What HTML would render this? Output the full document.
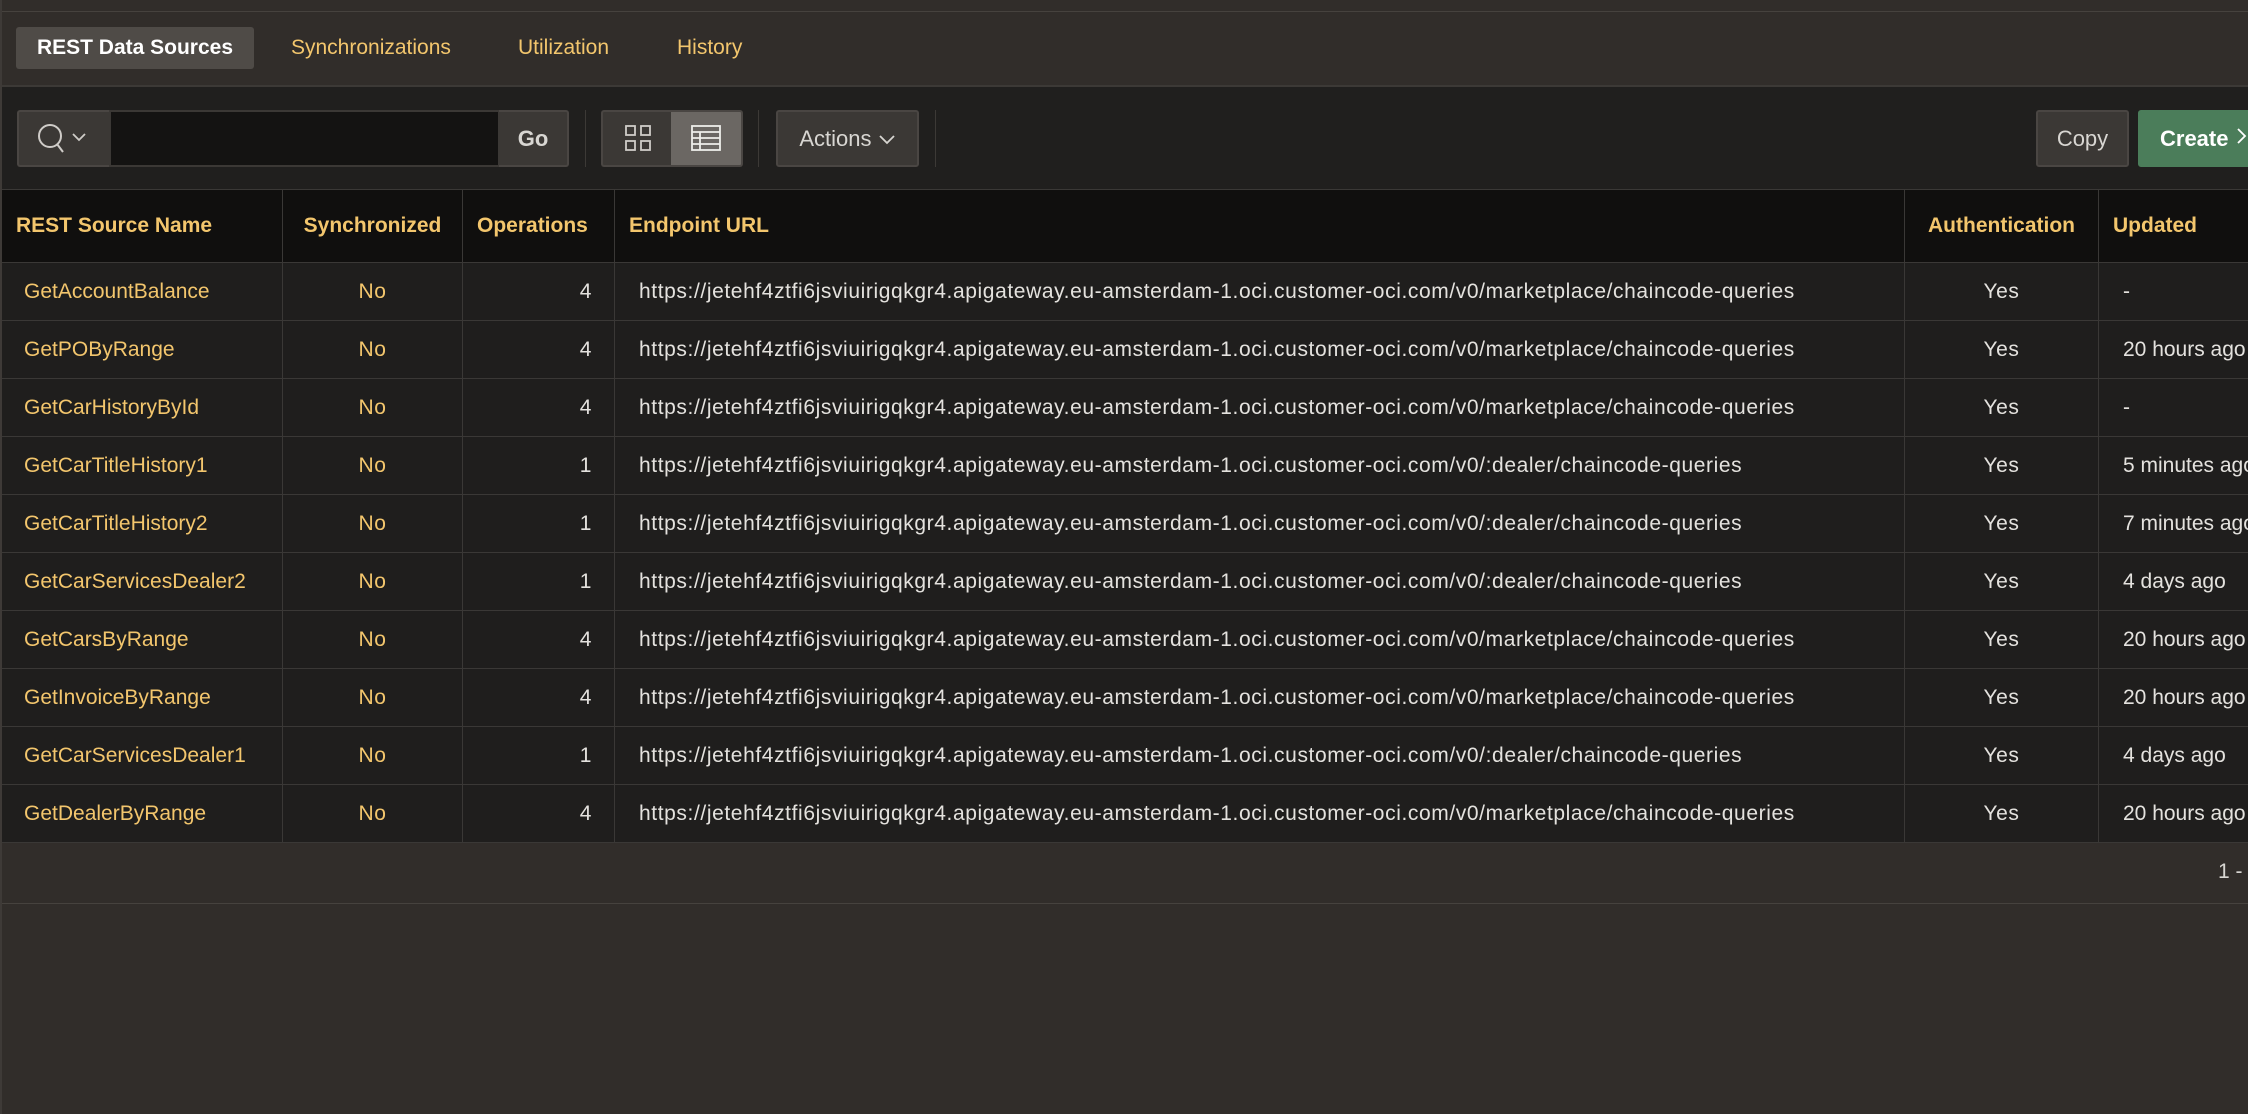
<!DOCTYPE html>
<html><head><meta charset="utf-8"><style>
*{box-sizing:border-box;margin:0;padding:0}
html,body{width:2248px;height:1114px;overflow:hidden;background:#312d2a;font-family:"Liberation Sans",sans-serif}
.abs{position:absolute}
.topline{left:0;top:11px;width:2248px;height:1px;background:#46423e}
.leftline{left:0;top:0;width:2px;height:1114px;background:#3e3a37}
.tab{top:27px;height:42px;line-height:42px;font-size:21px;color:#f3c66d;white-space:nowrap}
.tabact{left:16px;width:238px;background:#4f4b47;border-radius:3px;color:#fff;font-weight:bold;text-align:center}
.tabbar{left:0;top:85px;width:2248px;height:104px;background:#201f1e;border-top:2px solid #3c3936}
.btn{top:110px;height:57px;background:#3b3835;border:2px solid #4a4643;border-radius:3px;color:#d8d6d2;font-size:22px;text-align:center;line-height:53px;white-space:nowrap}
.sep{top:110px;width:1px;height:57px;background:#3c3936}
table{position:absolute;left:1px;top:189px;border-collapse:collapse;table-layout:fixed;width:2400px}
th{background:#100f0e;height:73px;color:#f3c66d;font-size:21px;font-weight:bold;text-align:left;padding:0 14px;border-left:1px solid #3a3836;border-top:1px solid #3a3836;white-space:nowrap}
td{background:#1f1e1d;height:58px;font-size:21px;letter-spacing:0.6px;color:#e4e2de;border:1px solid #3a3836;padding:0 14px;white-space:nowrap;overflow:hidden}
td.n{color:#f3c66d;padding-left:22px;letter-spacing:0}
td.s{color:#f3c66d;text-align:center}
td.o{text-align:right;padding-right:22px}
td.u{padding-left:24px}
td.a{text-align:center}
td.d{padding-left:24px;letter-spacing:0}
</style></head><body>
<div class="abs topline"></div>
<div class="abs tab tabact">REST Data Sources</div>
<div class="abs tab" style="left:291px">Synchronizations</div>
<div class="abs tab" style="left:518px">Utilization</div>
<div class="abs tab" style="left:677px">History</div>
<div class="abs tabbar"></div>
<div class="abs btn" style="left:17px;width:93px;border-right:none;border-radius:3px 0 0 3px">
<svg width="90" height="53" viewBox="0 0 90 53"><circle cx="30" cy="24" r="11" fill="none" stroke="#cfccc8" stroke-width="2"/><path d="M37 32l6 8" stroke="#cfccc8" stroke-width="2"/><path d="M53 22l6 6 6-6" fill="none" stroke="#cfccc8" stroke-width="1.8"/></svg></div>
<div class="abs" style="left:109px;top:110px;width:391px;height:57px;background:#141312;border:2px solid #3b3835"></div>
<div class="abs btn" style="left:499px;width:70px;border-left:none;border-radius:0 3px 3px 0;font-weight:bold">Go</div>
<div class="abs sep" style="left:585px"></div>
<div class="abs btn" style="left:601px;width:71px;border-right:none;border-radius:3px 0 0 3px">
<svg width="68" height="53" viewBox="0 0 68 53"><g fill="none" stroke="#cfccc8" stroke-width="1.8"><rect x="22" y="14" width="9" height="9"/><rect x="37" y="14" width="9" height="9"/><rect x="22" y="29" width="9" height="9"/><rect x="37" y="29" width="9" height="9"/></g></svg></div>
<div class="abs btn" style="left:671px;width:72px;background:#6b6763;border-left:none;border-radius:0 3px 3px 0">
<svg width="68" height="53" viewBox="0 0 68 53"><g fill="none" stroke="#eeeeea" stroke-width="1.8"><rect x="20" y="14" width="28" height="24"/><path d="M20 20h28M20 26h28M20 32h28M28 20v18"/></g></svg></div>
<div class="abs sep" style="left:758px"></div>
<div class="abs btn" style="left:776px;width:143px">Actions <svg width="18" height="12" viewBox="0 0 18 12"><path d="M2 2l7 7 7-7" fill="none" stroke="#d8d6d2" stroke-width="1.8"/></svg></div>
<div class="abs sep" style="left:935px"></div>
<div class="abs btn" style="left:2036px;width:93px">Copy</div>
<div class="abs btn" style="left:2138px;width:150px;background:#4b7d5a;border-color:#4b7d5a;color:#fff;font-weight:bold;text-align:left;padding-left:20px">Create <svg width="14" height="20" viewBox="0 0 14 20"><path d="M3 3l7 7-7 7" fill="none" stroke="#fff" stroke-width="1.8"/></svg></div>
<table>
<colgroup><col style="width:281px"><col style="width:180px"><col style="width:152px"><col style="width:1290px"><col style="width:194px"><col style="width:303px"></colgroup>
<tr><th>REST Source Name</th><th style="text-align:center">Synchronized</th><th>Operations</th><th>Endpoint URL</th><th style="text-align:center">Authentication</th><th>Updated</th></tr>
<tr><td class="n">GetAccountBalance</td><td class="s">No</td><td class="o">4</td><td class="u">https://jetehf4ztfi6jsviuirigqkgr4.apigateway.eu-amsterdam-1.oci.customer-oci.com/v0/marketplace/chaincode-queries</td><td class="a">Yes</td><td class="d">-</td></tr>
<tr><td class="n">GetPOByRange</td><td class="s">No</td><td class="o">4</td><td class="u">https://jetehf4ztfi6jsviuirigqkgr4.apigateway.eu-amsterdam-1.oci.customer-oci.com/v0/marketplace/chaincode-queries</td><td class="a">Yes</td><td class="d">20 hours ago</td></tr>
<tr><td class="n">GetCarHistoryById</td><td class="s">No</td><td class="o">4</td><td class="u">https://jetehf4ztfi6jsviuirigqkgr4.apigateway.eu-amsterdam-1.oci.customer-oci.com/v0/marketplace/chaincode-queries</td><td class="a">Yes</td><td class="d">-</td></tr>
<tr><td class="n">GetCarTitleHistory1</td><td class="s">No</td><td class="o">1</td><td class="u">https://jetehf4ztfi6jsviuirigqkgr4.apigateway.eu-amsterdam-1.oci.customer-oci.com/v0/:dealer/chaincode-queries</td><td class="a">Yes</td><td class="d">5 minutes ago</td></tr>
<tr><td class="n">GetCarTitleHistory2</td><td class="s">No</td><td class="o">1</td><td class="u">https://jetehf4ztfi6jsviuirigqkgr4.apigateway.eu-amsterdam-1.oci.customer-oci.com/v0/:dealer/chaincode-queries</td><td class="a">Yes</td><td class="d">7 minutes ago</td></tr>
<tr><td class="n">GetCarServicesDealer2</td><td class="s">No</td><td class="o">1</td><td class="u">https://jetehf4ztfi6jsviuirigqkgr4.apigateway.eu-amsterdam-1.oci.customer-oci.com/v0/:dealer/chaincode-queries</td><td class="a">Yes</td><td class="d">4 days ago</td></tr>
<tr><td class="n">GetCarsByRange</td><td class="s">No</td><td class="o">4</td><td class="u">https://jetehf4ztfi6jsviuirigqkgr4.apigateway.eu-amsterdam-1.oci.customer-oci.com/v0/marketplace/chaincode-queries</td><td class="a">Yes</td><td class="d">20 hours ago</td></tr>
<tr><td class="n">GetInvoiceByRange</td><td class="s">No</td><td class="o">4</td><td class="u">https://jetehf4ztfi6jsviuirigqkgr4.apigateway.eu-amsterdam-1.oci.customer-oci.com/v0/marketplace/chaincode-queries</td><td class="a">Yes</td><td class="d">20 hours ago</td></tr>
<tr><td class="n">GetCarServicesDealer1</td><td class="s">No</td><td class="o">1</td><td class="u">https://jetehf4ztfi6jsviuirigqkgr4.apigateway.eu-amsterdam-1.oci.customer-oci.com/v0/:dealer/chaincode-queries</td><td class="a">Yes</td><td class="d">4 days ago</td></tr>
<tr><td class="n">GetDealerByRange</td><td class="s">No</td><td class="o">4</td><td class="u">https://jetehf4ztfi6jsviuirigqkgr4.apigateway.eu-amsterdam-1.oci.customer-oci.com/v0/marketplace/chaincode-queries</td><td class="a">Yes</td><td class="d">20 hours ago</td></tr>
</table>
<div class="abs" style="left:0;top:903px;width:2248px;height:1px;background:#46423e"></div>
<div class="abs" style="left:2218px;top:860px;font-size:21px;color:#d8d6d2">1 -</div>
<div class="abs leftline"></div>
</body></html>
